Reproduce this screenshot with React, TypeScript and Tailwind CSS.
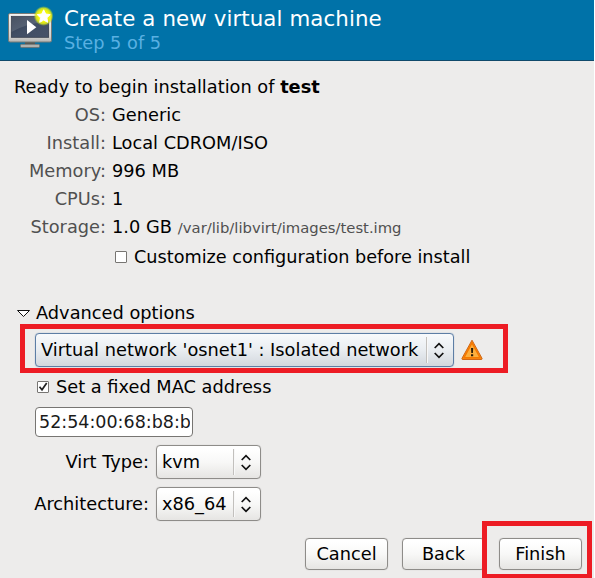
import React from "react";

const details = [
  { label: "OS:", value: "Generic" },
  { label: "Install:", value: "Local CDROM/ISO" },
  { label: "Memory:", value: "996 MB" },
  { label: "CPUs:", value: "1" },
  { label: "Storage:", value: "1.0 GB", note: "/var/lib/libvirt/images/test.img" },
];

function MonitorIcon() {
  return (
    <svg className="ml-[7px] mt-[6px] shrink-0" width="48" height="44" viewBox="7 6 48 44">
      <defs>
        <linearGradient id="screen" x1="0" y1="0" x2="1" y2="1">
          <stop offset="0" stopColor="#2f3a4c" />
          <stop offset="0.5" stopColor="#414e64" />
          <stop offset="1" stopColor="#465269" />
        </linearGradient>
        <linearGradient id="bezel" x1="0" y1="0" x2="0" y2="1">
          <stop offset="0" stopColor="#f4f4f3" />
          <stop offset="0.8" stopColor="#d4d4d2" />
          <stop offset="1" stopColor="#b4b4b2" />
        </linearGradient>
        <radialGradient id="glow">
          <stop offset="0.55" stopColor="#f4f80c" />
          <stop offset="0.78" stopColor="#e2ee18" stopOpacity="0.85" />
          <stop offset="1" stopColor="#a8cc30" stopOpacity="0" />
        </radialGradient>
      </defs>
      <path d="M25 41h10v4H25z" fill="#525551" />
      <rect x="20.5" y="44.3" width="19" height="3.3" rx="1" fill="#b0b1ae" stroke="#6d6f6b" strokeWidth=".8" />
      <rect x="8.5" y="13.5" width="43" height="28.5" rx="1.5" fill="url(#bezel)" stroke="#787a76" />
      <rect x="11.3" y="16.3" width="37.4" height="21" fill="url(#screen)" stroke="#2b3442" strokeWidth=".7" />
      <path d="M11.5 16.5h37v5Q27 23 11.5 32z" fill="#fff" opacity=".12" />
      <path d="M27 20v14.3l9.3-7.15z" fill="#fff" />
      <circle cx="43.6" cy="16" r="10" fill="url(#glow)" />
      <path d="m43.7 9.8 2 4.2 4.5.6-3.3 3.2.8 4.5-4-2.2-4 2.2.8-4.5-3.3-3.2 4.5-.6z" fill="#fff" stroke="#fff" strokeWidth="1" strokeLinejoin="round" />
    </svg>
  );
}

function Arrows() {
  return (
    <svg width="10" height="17" viewBox="0 0 10 17" className="shrink-0">
      <path d="M.7 6 5 1.7 9.3 6M.7 11 5 15.3 9.3 11" fill="none" stroke="#111" strokeWidth="1.7" />
    </svg>
  );
}

function Combo({ children, className }: { children: React.ReactNode; className: string }) {
  return (
    <div className={`flex h-[34px] shrink-0 items-center justify-between rounded-[4px] border pl-[5px] pr-[9px] ${className}`}>
      <span>{children}</span>
      <span className="flex items-center gap-[6px]">
        <span className="h-[26px] w-[2px] border-l border-[#c2c0bd] bg-[#f8f8f8]" />
        <Arrows />
      </span>
    </div>
  );
}

const neutral = "border-[#8e8c89] bg-linear-to-b from-white from-10% via-[#f8f8f7] via-50% to-[#e6e5e3]";

function Button({ children, className = "" }: { children: React.ReactNode; className?: string }) {
  return (
    <button className={`h-8 w-[83px] shrink-0 rounded-[4px] border shadow-[0_0_1px_#b5b3b0] ${neutral} ${className}`}>
      {children}
    </button>
  );
}

export default function App() {
  return (
    <div className="relative h-[578px] w-[595px] overflow-hidden bg-white font-['DejaVu_Sans',sans-serif] text-[17.78px] leading-7 whitespace-nowrap text-black">
      <div className="flex h-full w-[594px] flex-col bg-[#edeceb]">
        <header className="flex h-[61px] shrink-0 border-b border-[#104a6b] bg-[#0072a8]">
          <MonitorIcon />
          <div className="ml-[9px] pt-[5px]">
            <h1 className="text-[21.33px] leading-[27px] tracking-[0.1px] text-white">Create a new virtual machine</h1>
            <p className="leading-[22px] text-[#59b0e2]">Step 5 of 5</p>
          </div>
        </header>

        <p className="mt-3 pl-[14px]">
          Ready to begin installation of <b>test</b>
        </p>
        {details.map((d) => (
          <div key={d.label} className="flex h-7">
            <span className="w-[106px] text-right text-[#505050]">{d.label}</span>
            <span className="ml-[6px]">{d.value}</span>
            {d.note && <span className="ml-[6px] pt-px text-[14.8px] text-[#505050]">{d.note}</span>}
          </div>
        ))}
        <label className="mt-[2px] ml-[115px] flex h-7 items-center text-[17.67px]">
          <span className="mr-[7px] size-3 rounded-[1px] border border-[#777572] bg-white" />
          Customize configuration before install
        </label>

        <div className="mt-7 ml-[16px] flex h-7 items-center">
          <svg width="15" height="9" viewBox="0 0 15 9" className="mr-[5px]">
            <path d="M1.5 1.5h12l-6 6z" fill="#fff" stroke="#111" />
          </svg>
          Advanced options
        </div>
        <div className="mt-[6px] ml-[35px] flex items-center">
          <Combo className="w-[419px] border-[#5d7ea5] bg-linear-to-b from-[#f8fafc] via-[#e9edf1] via-50% to-[#d3d8de] shadow-[0_0_1px_#7895b8]">
            Virtual network 'osnet1' : Isolated network
          </Combo>
          <svg width="22" height="22" viewBox="0 0 22 22" className="ml-[7px]">
            <path d="M11 1.2 21 19.3q.4 1.2-1 1.2H2q-1.4 0-1-1.2z" fill="#f88b17" stroke="#cf6717" strokeLinejoin="round" />
            <path d="M11 3.8 19 18.7H3z" fill="#fcaf3e" stroke="#f57900" strokeWidth="1.4" strokeLinejoin="round" />
            <path d="M10 9h2.2l-.3 5h-1.6zM10 15.3h2.2v2H10z" fill="#2a1b08" />
          </svg>
        </div>
        <label className="mt-[6px] ml-[37px] flex h-7 items-center">
          <span className="mr-[7px] flex size-3 items-center justify-center rounded-[1px] border border-[#777572] bg-white">
            <svg width="10" height="10" viewBox="0 0 10 10">
              <path d="M1.5 4.8 4 7.8 8.7 1" fill="none" stroke="#222" strokeWidth="1.7" />
            </svg>
          </span>
          Set a fixed MAC address
        </label>
        <div className="mt-[6px] ml-[35px] flex h-[30px] w-[158px] items-center rounded-[4px] border border-[#777572] bg-white pl-[3px]">
          <span className="w-[151px] overflow-hidden text-[17.5px] text-[#1a1a1a]">52:54:00:68:b8:b</span>
        </div>
        <div className="mt-2 flex items-center">
          <span className="w-[149px] text-right">Virt Type:</span>
          <Combo className={`ml-[7px] w-[105px] shadow-[0_0_1px_#b5b3b0] ${neutral}`}>kvm</Combo>
        </div>
        <div className="mt-2 flex items-center">
          <span className="w-[149px] text-right">Architecture:</span>
          <Combo className={`ml-[7px] w-[105px] shadow-[0_0_1px_#b5b3b0] ${neutral}`}>x86_64</Combo>
        </div>
        <footer className="mt-[17px] ml-[305px] flex gap-[14px]">
          <Button>Cancel</Button>
          <Button>Back</Button>
          <Button>Finish</Button>
        </footer>
      </div>
      <div className="absolute top-[324px] left-[20px] h-[49px] w-[488px] border-5 border-[#ed1c24]" />
      <div className="absolute top-[521px] left-[482px] h-[58px] w-[110px] border-5 border-[#ed1c24]" />
    </div>
  );
}
